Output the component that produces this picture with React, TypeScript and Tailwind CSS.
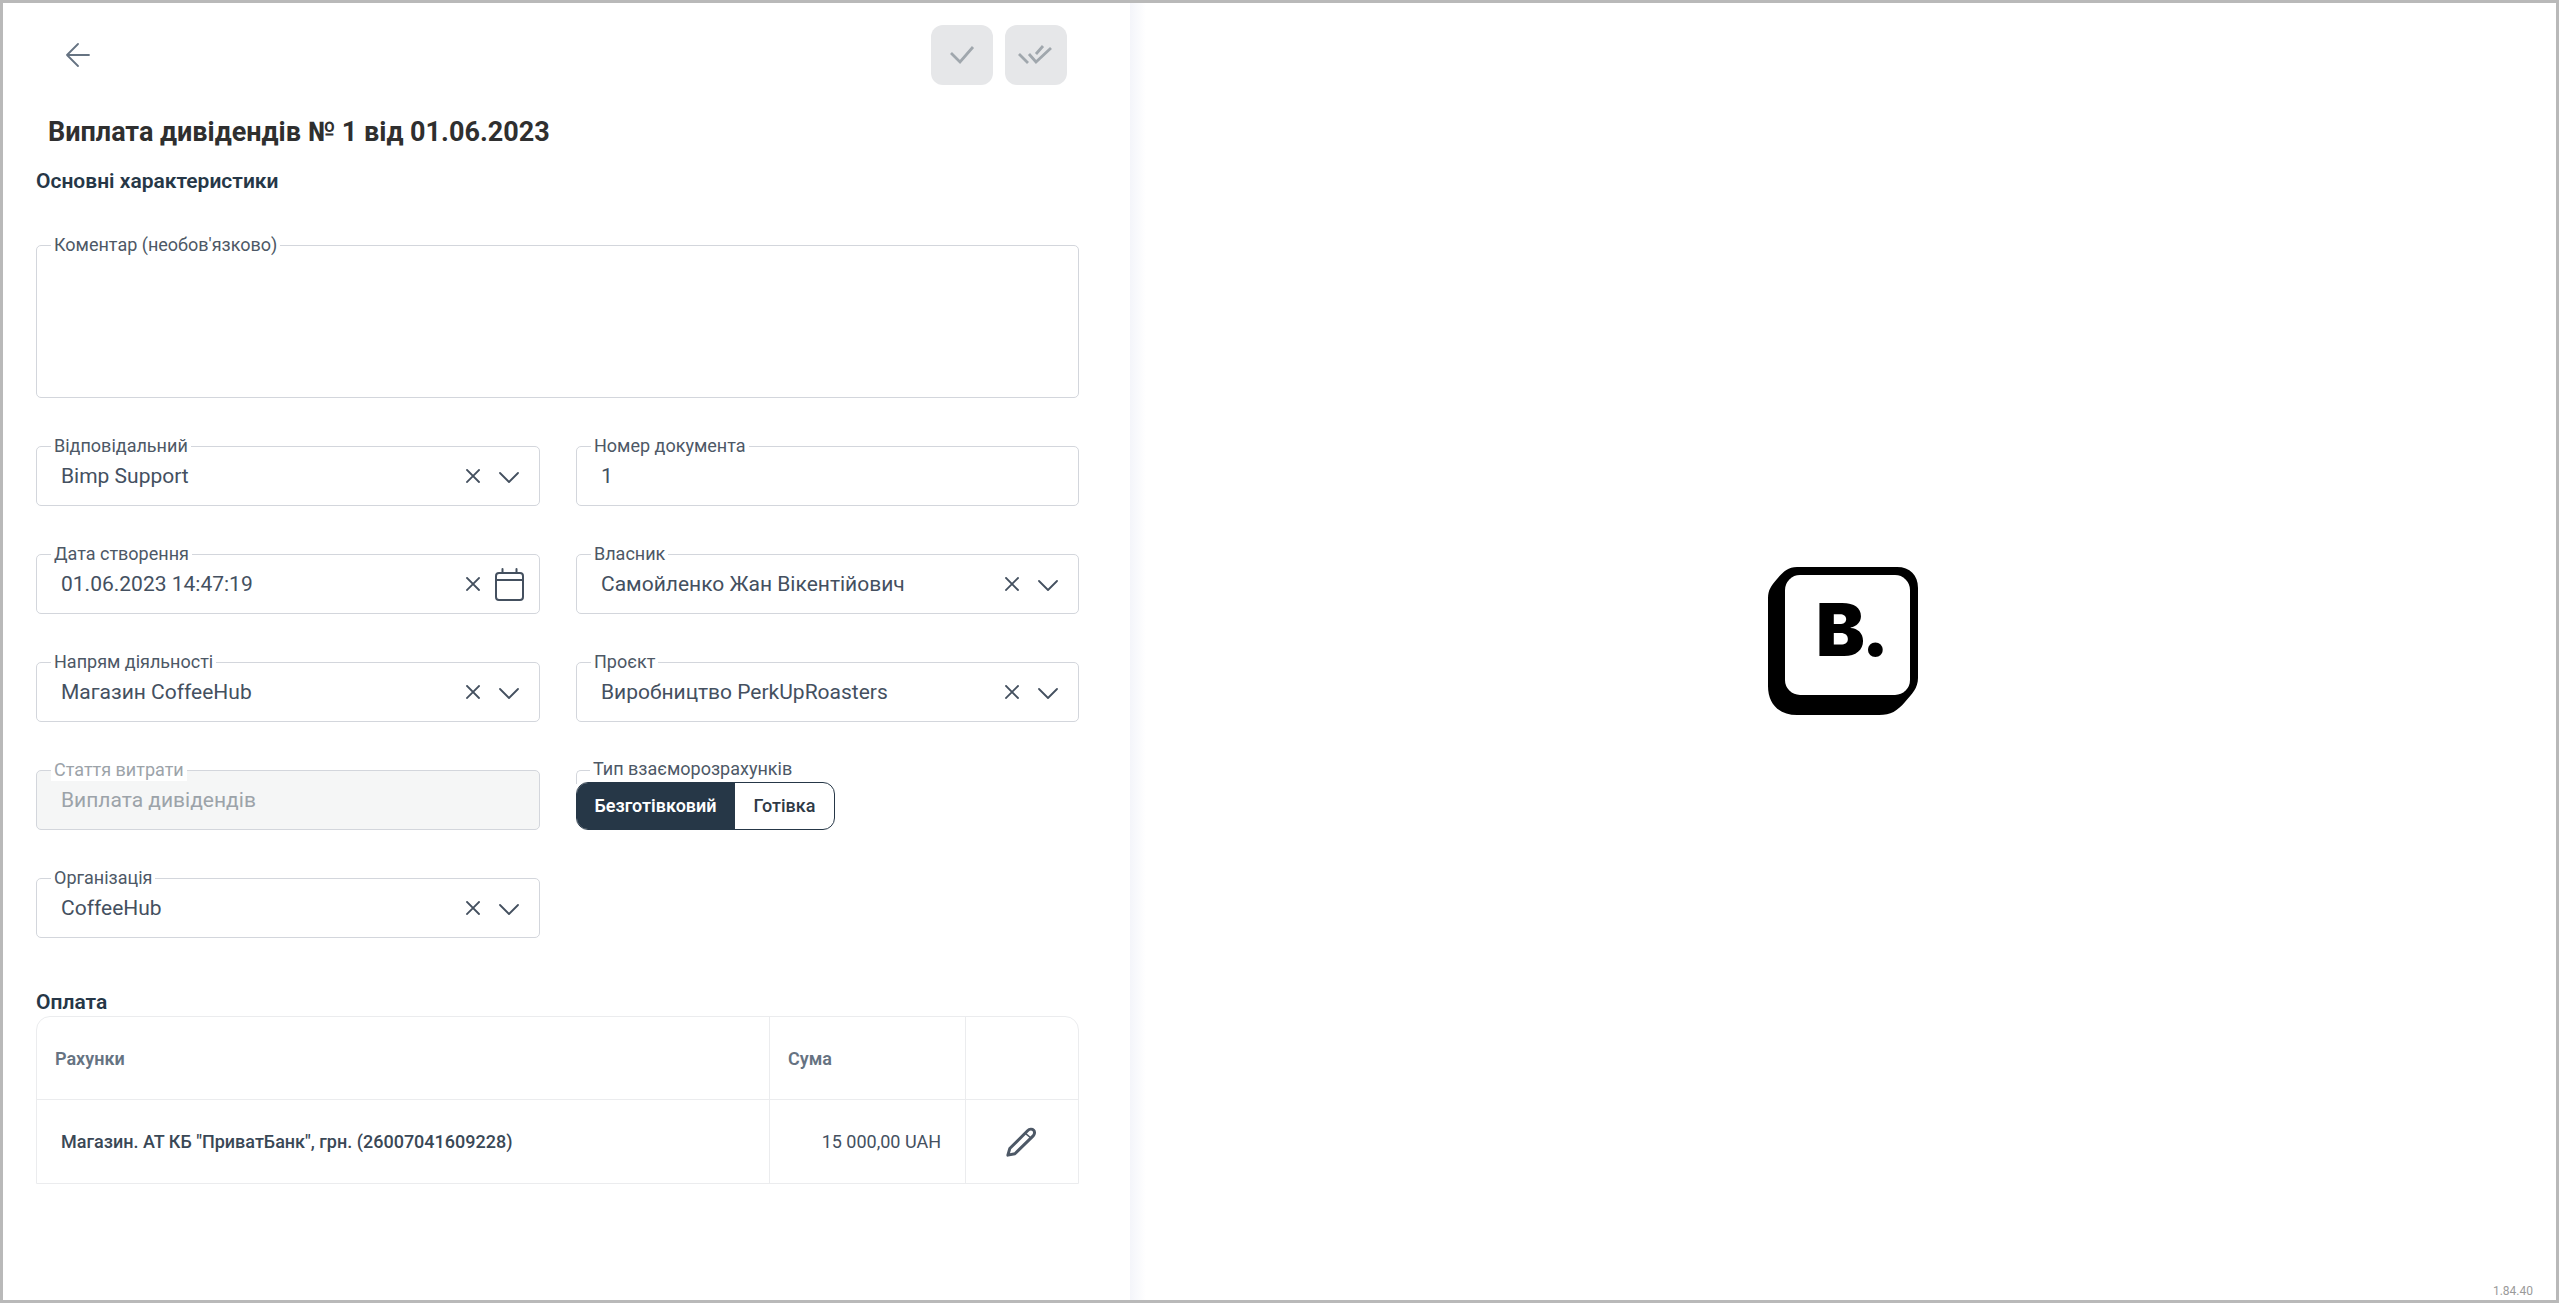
const font = { fontFamily: "Roboto, 'Liberation Sans', sans-serif" };

function XIcon() {
  return (
    <svg width="14" height="14" viewBox="0 0 14 14" fill="none" stroke="#44505f" strokeWidth="1.8" strokeLinecap="square">
      <path d="M1 1 L13 13 M13 1 L1 13" />
    </svg>
  );
}

function Chevron() {
  return (
    <svg width="20" height="12" viewBox="0 0 20 12" fill="none" stroke="#44505f" strokeWidth="1.8" strokeLinecap="round" strokeLinejoin="round">
      <path d="M1 2 L10 11 L19 2" />
    </svg>
  );
}

function CalendarIcon() {
  return (
    <svg width="29" height="33" viewBox="0 0 29 33" fill="none" stroke="#44505f" strokeWidth="2" strokeLinecap="round">
      <rect x="1" y="5" width="27" height="27" rx="3" />
      <path d="M1 12 H28 M7.5 1 V5 M21.5 1 V5" />
    </svg>
  );
}

function Field({ label, className = "", children, disabled = false }: { label: string; className?: string; children?: React.ReactNode; disabled?: boolean }) {
  return (
    <div className={`relative h-[60px] rounded-[5px] border border-[#d3d6dc] flex items-center pl-[24px] ${disabled ? "bg-[#f5f6f6]" : "bg-white"} ${className}`}>
      <span className={`absolute left-[14px] -top-[12px] bg-white px-[3px] text-[18px] leading-[22px] ${disabled ? "text-[#9ca3a9]" : "text-[#4d5866]"}`}>{label}</span>
      {children}
    </div>
  );
}

function Select({ label, value }: { label: string; value: string }) {
  return (
    <Field label={label}>
      <span className="flex-1 text-[21px] leading-[24px] text-[#44505f]">{value}</span>
      <span className="mr-[19px] flex"><XIcon /></span>
      <span className="mr-[20px] mt-[2px] flex"><Chevron /></span>
    </Field>
  );
}

export default function App() {
  return (
    <div style={font} className="relative h-[1303px] w-full flex overflow-hidden border-[3px] border-[#b9b9b9] bg-white">
      <div className="w-[1127px] shrink-0 pl-[33px] pr-[51px] flex flex-col">
        <div className="h-[82px] pt-[22px] flex justify-between items-start">
          <svg className="ml-[30px] mt-[18px]" width="24" height="24" viewBox="0 0 24 24" fill="none" stroke="#667382" strokeWidth="1.8" strokeLinecap="round" strokeLinejoin="round">
            <path d="M23 12 H1 M12 1 L1 12 L12 23" />
          </svg>
          <div className="flex gap-[12px] mr-[12px]">
            <div className="w-[62px] h-[60px] rounded-[12px] bg-[#e6e7e9] flex items-center justify-center">
              <svg width="26" height="20" viewBox="0 0 26 20" fill="none" stroke="#a0a7ad" strokeWidth="2.8">
                <path d="M2 8 L11 17 L24 2" />
              </svg>
            </div>
            <div className="w-[62px] h-[60px] rounded-[12px] bg-[#e6e7e9] flex items-center justify-center">
              <svg width="36" height="20" viewBox="0 0 36 20" fill="none" stroke="#a0a7ad" strokeWidth="2.8">
                <path d="M1 9 L10 18 M11 9 L18 17 L33 3 M18 9 L25 1" />
              </svg>
            </div>
          </div>
        </div>
        <h1 className="pl-[12px] mt-[31px] text-[27px] leading-[32px] font-bold text-[#2f2f2f]">Виплата дивідендів № 1 від 01.06.2023</h1>
        <h2 className="mt-[21px] text-[21px] leading-[24px] font-semibold text-[#263747]">Основні характеристики</h2>

        <Field label="Коментар (необов'язково)" className="!h-[153px] mt-[52px]" />

        <div className="grid grid-cols-[504px_503px] gap-x-[36px] gap-y-[48px] mt-[48px]">
          <Select label="Відповідальний" value="Bimp Support" />
          <Field label="Номер документа">
            <span className="text-[21px] leading-[24px] text-[#44505f]">1</span>
          </Field>

          <Field label="Дата створення">
            <span className="flex-1 text-[21px] leading-[24px] text-[#44505f]">01.06.2023 14:47:19</span>
            <span className="mr-[15px] flex"><XIcon /></span>
            <span className="mr-[15px] flex"><CalendarIcon /></span>
          </Field>
          <Select label="Власник" value="Самойленко Жан Вікентійович" />

          <Select label="Напрям діяльності" value="Магазин CoffeeHub" />
          <Select label="Проєкт" value="Виробництво PerkUpRoasters" />

          <Field label="Стаття витрати" disabled>
            <span className="text-[21px] leading-[24px] text-[#9ca3a9]">Виплата дивідендів</span>
          </Field>
          <div className="relative h-[60px]">
            <div className="absolute left-0 top-0 w-[14px] h-[14px] border-l border-t border-[#d3d6dc] rounded-tl-[5px]" />
            <span className="absolute left-[14px] -top-[12px] bg-white px-[3px] text-[18px] leading-[22px] text-[#4d5866]">Тип взаєморозрахунків</span>
            <div className="absolute left-0 top-[12px] h-[48px] flex w-[259px] rounded-[12px] border border-[#263747] overflow-hidden bg-white">
              <div className="w-[159px] -ml-px pb-[2px] bg-[#263747] flex items-center justify-center text-[18px] font-semibold text-white">Безготівковий</div>
              <div className="flex-1 pb-[2px] flex items-center justify-center text-[18px] font-medium text-[#2f3a46]">Готівка</div>
            </div>
          </div>

          <Select label="Організація" value="CoffeeHub" />
        </div>

        <h2 className="mt-[52px] text-[21px] leading-[24px] font-semibold text-[#263747]">Оплата</h2>
        <div className="mt-[2px] w-[1043px] rounded-t-[14px] border border-[#ebecee] grid grid-cols-[733px_196px_1fr] text-[18px]">
          <div className="h-[83px] flex items-center pl-[18px] border-b border-r border-[#ebecee] font-semibold text-[#667382]">Рахунки</div>
          <div className="h-[83px] flex items-center pl-[18px] border-b border-r border-[#ebecee] font-semibold text-[#667382]">Сума</div>
          <div className="h-[83px] border-b border-[#ebecee]" />
          <div className="h-[83px] flex items-center pl-[24px] border-r border-[#ebecee] font-medium text-[#3a4856]">Магазин. АТ КБ "ПриватБанк", грн. (26007041609228)</div>
          <div className="h-[83px] flex items-center justify-end pr-[24px] border-r border-[#ebecee] text-[#44505f]">15 000,00 UAH</div>
          <div className="h-[83px] flex items-center justify-center pr-[2px]">
            <svg width="30" height="30" viewBox="0 0 32 32" fill="none" stroke="#4d5866" strokeWidth="3.2" strokeLinejoin="round">
              <path d="M2 30 L4 23 L23 4 C25 2 28 2 29.5 3.5 C31 5 30.5 8 29 9.5 L9.5 28.5 Z" />
              <path d="M21 7 L27 12" strokeWidth="1.6" />
            </svg>
          </div>
        </div>
      </div>

      <div className="flex-1 relative flex items-center justify-center pb-[22px] bg-gradient-to-r from-[#f4f5fa] to-white to-[16px] bg-no-repeat">
        <svg width="152" height="150" viewBox="0 0 152 150">
          <path d="M30 1 H130 C143 1 151 9 151 22 V112 C151 122 145 128 138 136 C130 145 124 149 112 149 H30 C12 149 1 138 1 120 V32 C1 24 4 20 10 13 C16 6 21 1 30 1 Z" fill="#000" />
          <rect x="18" y="9" width="125" height="120" rx="15" fill="#fff" />
          <text x="49" y="90" fontFamily="Inter, sans-serif" fontWeight="900" fontSize="73" letterSpacing="-3" fill="#000">B.</text>
        </svg>
        <span className="absolute right-[23px] bottom-[2px] text-[12px] leading-[14px] text-[#9a9a9a]">1.84.40</span>
      </div>
    </div>
  );
}
